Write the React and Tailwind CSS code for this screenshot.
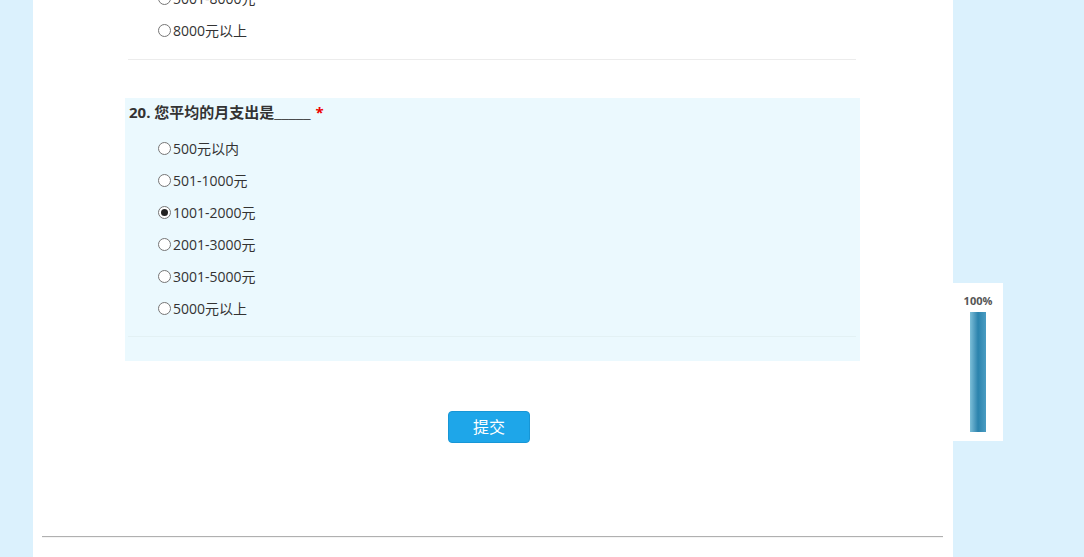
import React from "react";

const PREV_OPTIONS = ["5001-8000元", "8000元以上"];

const OPTIONS = [
  { label: "500元以内", checked: false },
  { label: "501-1000元", checked: false },
  { label: "1001-2000元", checked: true },
  { label: "2001-3000元", checked: false },
  { label: "3001-5000元", checked: false },
  { label: "5000元以上", checked: false },
];

function Radio({ checked }) {
  return (
    <span className="w-[13px] h-[13px] rounded-full border border-[#767676] bg-white flex items-center justify-center flex-shrink-0">
      {checked && <span className="w-[7px] h-[7px] rounded-full bg-[#222]" />}
    </span>
  );
}

function Option({ label, checked }) {
  return (
    <div className="h-[32px] flex items-center pl-[30px]">
      <Radio checked={checked} />
      <span className="ml-[2px] text-[14px] text-[#333]">{label}</span>
    </div>
  );
}

export default function App() {
  return (
    <div
      className="w-full h-[557px] overflow-hidden bg-[#dbf1fd] relative"
      style={{ fontFamily: '"Open Sans", "Noto Sans CJK SC", sans-serif' }}
    >
      <div className="ml-[33px] w-[920px] h-full bg-white flex flex-col">
        {/* previous question (scrolled) */}
        <div className="ml-[95px] w-[728px] -mt-[18px]">
          {PREV_OPTIONS.map((o) => (
            <Option key={o} label={o} checked={false} />
          ))}
          <div className="mt-[13px] h-px bg-[#ececec]" />
        </div>

        {/* question 20 */}
        <div className="ml-[92px] w-[735px] mt-[38px] bg-[#ebf9fe] px-[3px] pb-[24px]">
          <div className="h-[29px] flex items-center pl-[1px] text-[15px] font-bold text-[#333]">
            20. 您平均的月支出是
            <span className="font-['Liberation_Sans'] text-[13px] font-normal">_____</span>
            <span className="ml-[5px] text-[#e00] font-bold">*</span>
          </div>
          <div className="mt-[5px]">
            {OPTIONS.map((o) => (
              <Option key={o.label} label={o.label} checked={o.checked} />
            ))}
          </div>
          <div className="mt-[12px] mr-[1px] h-px bg-[#e3f1f4]" />
        </div>

        {/* submit */}
        <div className="mt-[50px] pl-[415px]">
          <button className="w-[82px] h-[32px] rounded-[4px] bg-[#1ea6e9] border border-[#1796d6] text-white text-[16px] flex items-center justify-center">
            提交
          </button>
        </div>

        <div className="mt-[93px] mx-[9px] mr-[10px] h-px bg-[#b0b0b0]" />
        <div className="mx-[9px] mr-[10px] h-px bg-[#f4f4f4]" />
      </div>

      {/* progress widget */}
      <div className="absolute left-[953px] top-[283px] w-[50px] h-[158px] bg-white flex flex-col items-center">
        <div className="mt-[10px] h-[16px] flex items-center text-[11px] font-bold text-[#555]">
          100%
        </div>
        <div className="mt-[3px] w-[16px] h-[120px] bg-gradient-to-r from-[#7cbfd9] via-[#2a83ad] to-[#4a9cc2]" />
      </div>
    </div>
  );
}
